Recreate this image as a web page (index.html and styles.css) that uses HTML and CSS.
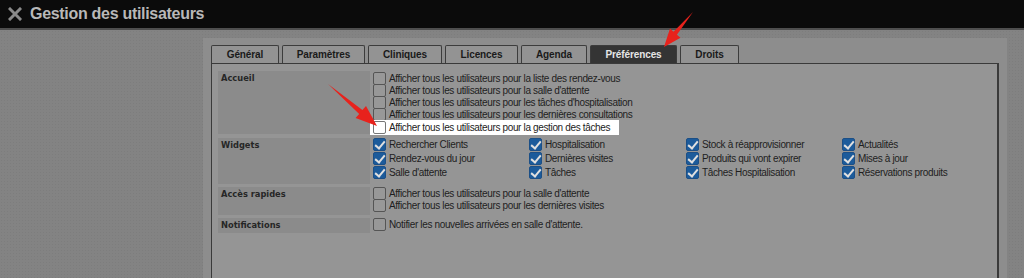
FILE: index.html
```html
<!DOCTYPE html>
<html lang="fr">
  <head>
    <meta charset="UTF-8" />
    <meta name="viewport" content="width=device-width, initial-scale=1.0" />
    <title>Gestion des utilisateurs</title>
    <link rel="stylesheet" href="styles.css">
  </head>
  <body>
    <header class="topBar">
      <svg class="closeIcon" width="14" height="14" viewBox="0 0 14 14">
        <path d="M2 2 L12 12 M12 2 L2 12" stroke="#8a8a8a" stroke-width="3" stroke-linecap="square" />
      </svg>
      <h1>Gestion des utilisateurs</h1>
    </header>
    <main class="stage">
      <div class="panel">
        <nav class="tabs">
          <button class="tab" style="width:68px">Général</button>
          <button class="tab" style="width:83px">Paramètres</button>
          <button class="tab" style="width:74px">Cliniques</button>
          <button class="tab" style="width:73px">Licences</button>
          <button class="tab" style="width:66px">Agenda</button>
          <button class="tab active" style="width:87px">Préférences</button>
          <button class="tab" style="width:59px">Droits</button>
        </nav>
        <div class="tabContent">
          <section class="prefRow accueil">
            <div class="prefLabel">Accueil</div>
            <div class="prefList">
              <label class="opt"><span class="box"></span>Afficher tous les utilisateurs pour la liste des rendez-vous</label>
              <label class="opt"><span class="box"></span>Afficher tous les utilisateurs pour la salle d'attente</label>
              <label class="opt"><span class="box"></span>Afficher tous les utilisateurs pour les tâches d'hospitalisation</label>
              <label class="opt"><span class="box"></span>Afficher tous les utilisateurs pour les dernières consultations</label>
              <label class="opt highlight"><span class="box"></span>Afficher tous les utilisateurs pour la gestion des tâches</label>
            </div>
          </section>
          <section class="prefRow widgets">
            <div class="prefLabel">Widgets</div>
            <div class="prefGrid">
              <label class="opt"><span class="box checked"></span>Rechercher Clients</label>
              <label class="opt"><span class="box checked"></span>Hospitalisation</label>
              <label class="opt"><span class="box checked"></span>Stock à réapprovisionner</label>
              <label class="opt"><span class="box checked"></span>Actualités</label>
              <label class="opt"><span class="box checked"></span>Rendez-vous du jour</label>
              <label class="opt"><span class="box checked"></span>Dernières visites</label>
              <label class="opt"><span class="box checked"></span>Produits qui vont expirer</label>
              <label class="opt"><span class="box checked"></span>Mises à jour</label>
              <label class="opt"><span class="box checked"></span>Salle d'attente</label>
              <label class="opt"><span class="box checked"></span>Tâches</label>
              <label class="opt"><span class="box checked"></span>Tâches Hospitalisation</label>
              <label class="opt"><span class="box checked"></span>Réservations produits</label>
            </div>
          </section>
          <section class="prefRow rapides">
            <div class="prefLabel">Accès rapides</div>
            <div class="prefList">
              <label class="opt"><span class="box"></span>Afficher tous les utilisateurs pour la salle d'attente</label>
              <label class="opt"><span class="box"></span>Afficher tous les utilisateurs pour les dernières visites</label>
            </div>
          </section>
          <section class="prefRow notifs">
            <div class="prefLabel">Notifications</div>
            <div class="prefList">
              <label class="opt"><span class="box"></span>Notifier les nouvelles arrivées en salle d'attente.</label>
            </div>
          </section>
        </div>
      </div>
    </main>
    <svg class="arrows" width="1024" height="278" viewBox="0 0 1024 278">
      <path d="M328 84 L362.4 110.1 L366 105.9 L377 126 L355.6 118.1 L359.2 113.9 Z" fill="#e8221c" />
      <path d="M693 12 L676.9 34.7 L680.5 37.8 L664 47 L670 28.6 L673.5 31.7 Z" fill="#e8221c" />
    </svg>
  </body>
</html>
```

FILE: styles.css
```css
* {
  box-sizing: border-box;
}
body {
  margin: 0;
  width: 1024px;
  height: 278px;
  overflow: hidden;
  background-color: #838383;
  font-family: "Liberation Sans", Arial, sans-serif;
  position: relative;
}
.topBar {
  height: 30px;
  background-color: #0b0b0b;
  border-bottom: 2px solid #4e4e4e;
  display: flex;
  align-items: center;
  padding-left: 8px;
  gap: 8px;
}
.topBar h1 {
  margin: 0;
  font-size: 16px;
  letter-spacing: -0.3px;
  font-weight: bold;
  color: #b8b8b8;
}
.stage {
  height: 248px;
  padding: 8px 17px 0 203px;
  background-color: #838383;
  background-image: radial-gradient(#7d7d7d 0.6px, transparent 0.6px);
  background-size: 3px 3px;
}
.panel {
  height: 100%;
  background-color: #8d8d8d;
  padding: 7px 8px 0 8px;
}
.tabs {
  display: flex;
  gap: 3px;
  height: 18px;
}
.tab {
  height: 18px;
  padding: 0;
  border: 1px solid #3c3c3c;
  border-bottom: none;
  border-radius: 2px 2px 0 0;
  background-color: #939393;
  color: #1a1a1a;
  font-family: "Liberation Sans", Arial, sans-serif;
  font-size: 10px;
  letter-spacing: -0.1px;
  font-weight: bold;
}
.tab.active {
  background-color: #343434;
  color: #e6e6e6;
}
.tabContent {
  height: 100%;
  background-color: #959595;
  border: 1px solid #3a3a3a;
  border-right-width: 2px;
  border-bottom: none;
  padding: 7px 6px 0 6px;
  display: flex;
  flex-direction: column;
  gap: 3px;
}
.prefRow {
  display: grid;
  grid-template-columns: 152px 1fr;
  column-gap: 3px;
}
.prefLabel {
  background-color: #8b8b8b;
  background-image: radial-gradient(#858585 0.6px, transparent 0.6px);
  background-size: 2px 2px;
  padding: 2px 3px;
  font-family: "DejaVu Sans", Verdana, sans-serif;
  font-size: 8.3px;
  font-weight: bold;
  color: #262626;
}
.prefList {
  display: flex;
  flex-direction: column;
}
.accueil .prefList {
  padding-top: 1px;
}
.accueil .prefLabel {
  height: 63px;
}
.widgets .prefLabel {
  height: 46px;
}
.rapides .prefLabel {
  height: 28px;
}
.notifs .prefLabel {
  height: 15px;
}
.prefGrid {
  display: grid;
  grid-template-columns: 156px 157px 156px 150px;
  grid-auto-rows: 14px;
  margin-top: -1px;
}
.opt {
  display: flex;
  align-items: center;
  height: 12px;
  font-size: 10px;
  letter-spacing: -0.35px;
  color: #1e1e1e;
  white-space: nowrap;
}
.prefGrid .opt {
  height: 14px;
}
.box {
  width: 13px;
  height: 13px;
  flex: none;
  margin-right: 3px;
  border: 1px solid #555;
  border-radius: 2px;
  background-color: #989898;
}
.box.checked {
  border-color: #1c4f86;
  background-color: #1c5b9b;
  position: relative;
}
.box.checked::after {
  content: "";
  position: absolute;
  left: 3px;
  top: 0px;
  width: 4px;
  height: 8px;
  border: solid #e0e0e0;
  border-width: 0 2px 2px 0;
  transform: rotate(40deg);
}
.opt.highlight {
  align-self: flex-start;
  height: 15px;
  margin: 0 0 0 -3px;
  padding: 0 9px 0 3px;
  background-color: #ffffff;
  color: #222;
}
.opt.highlight .box {
  background-color: #ffffff;
  border-color: #777;
}
.arrows {
  position: absolute;
  left: 0;
  top: 0;
  pointer-events: none;
}
```
